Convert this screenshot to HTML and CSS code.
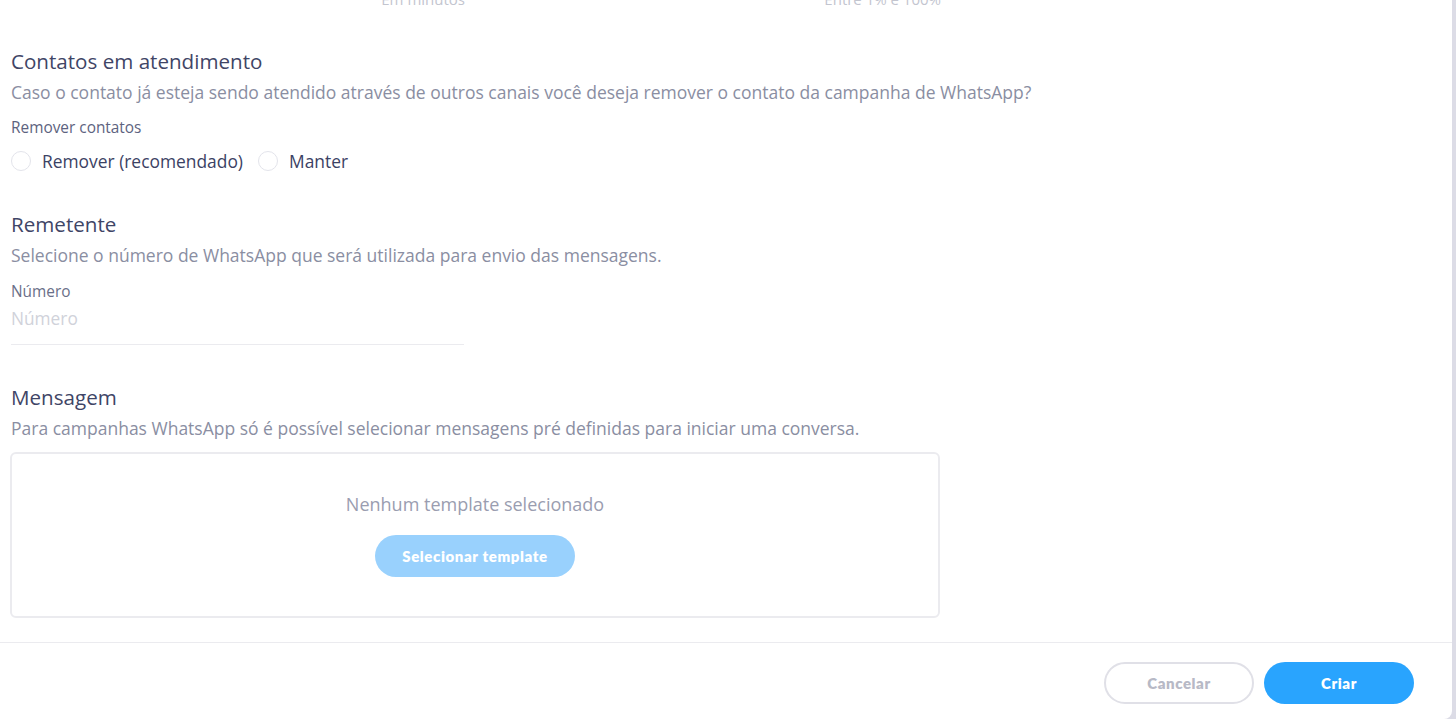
FILE: index.html
```html
<!DOCTYPE html>
<html lang="pt-BR">
<head>
<meta charset="utf-8">
<title>Campanha WhatsApp</title>
<link rel="stylesheet" href="styles.css">
</head>
<body>
<div class="panel">
  <div class="content">
    <div class="hint-row">
      <div class="hint-col">Em minutos</div>
      <div class="hint-col">Entre 1% e 100%</div>
    </div>

    <section class="section first">
      <h2 class="title">Contatos em atendimento</h2>
      <p class="desc">Caso o contato já esteja sendo atendido através de outros canais você deseja remover o contato da campanha de WhatsApp?</p>
      <div class="label">Remover contatos</div>
      <div class="radios">
        <label class="radio"><span class="circle"></span><span>Remover (recomendado)</span></label>
        <label class="radio"><span class="circle"></span><span>Manter</span></label>
      </div>
    </section>

    <section class="section">
      <h2 class="title">Remetente</h2>
      <p class="desc">Selecione o número de WhatsApp que será utilizada para envio das mensagens.</p>
      <div class="label light">Número</div>
      <div class="input">Número</div>
    </section>

    <section class="section last">
      <h2 class="title">Mensagem</h2>
      <p class="desc">Para campanhas WhatsApp só é possível selecionar mensagens pré definidas para iniciar uma conversa.</p>
      <div class="template-box">
        <div class="empty">Nenhum template selecionado</div>
        <button class="btn btn-light">Selecionar template</button>
      </div>
    </section>
  </div>

  <div class="footer">
    <button class="btn btn-outline">Cancelar</button>
    <button class="btn btn-primary">Criar</button>
  </div>
</div>
</body>
</html>
```

FILE: styles.css
```css
html, body {
  margin: 0;
  padding: 0;
  height: 719px;
  overflow: hidden;
}
body {
  background: #dcdce6;
  font-family: "Open Sans", "Liberation Sans", sans-serif;
}
.panel {
  width: 1452px;
  height: 719px;
  background: #ffffff;
  border-bottom-right-radius: 8px;
  display: flex;
  flex-direction: column;
}
.content {
  flex: 1;
  padding-left: 11px;
}
.hint-row {
  display: flex;
  gap: 22px;
  width: 930px;
  margin-top: -11px;
  height: 20px;
}
.hint-col {
  width: 454px;
  text-align: right;
  font-size: 15px;
  line-height: 20px;
  color: #c3c5cf;
}
.section {
  margin-top: 38px;
}
.section.first {
  margin-top: 39px;
}
.section.last {
  margin-top: 39px;
}
.title {
  margin: 0;
  font-size: 20.6px;
  line-height: 26px;
  font-weight: 500;
  color: #3f4566;
}
.desc {
  margin: 6px 0 0;
  font-size: 17.5px;
  line-height: 24px;
  color: #8a8ea2;
}
.label {
  margin-top: 14px;
  font-size: 15.4px;
  line-height: 20px;
  font-weight: 500;
  color: #5d6380;
}
.label.light {
  margin-top: 15px;
  font-weight: 400;
  color: #6a6f88;
}
.radios {
  display: flex;
  gap: 15px;
  margin-top: 11px;
}
.radio {
  display: flex;
  align-items: center;
  gap: 11px;
  font-size: 17.4px;
  line-height: 24px;
  color: #3b4264;
}
.circle {
  width: 18px;
  height: 18px;
  border: 1px solid #e3e4eb;
  border-radius: 50%;
  background: #fff;
}
.input {
  width: 453px;
  margin-top: 5px;
  padding-bottom: 13px;
  border-bottom: 1px solid #ebebef;
  font-size: 17.3px;
  line-height: 24px;
  color: #d0d2da;
}
.template-box {
  width: 926px;
  height: 162px;
  margin-top: 12px;
  margin-left: -1px;
  border: 2px solid #ebebef;
  border-radius: 6px;
  display: flex;
  flex-direction: column;
  align-items: center;
  box-sizing: content-box;
}
.empty {
  margin-top: 38px;
  font-size: 18px;
  line-height: 24px;
  color: #9a9db0;
}
.btn {
  font-family: "Lato", "Liberation Sans", sans-serif;
  font-weight: 800;
  font-size: 15px;
  letter-spacing: 0.6px;
  border-radius: 21px;
  height: 42px;
  cursor: pointer;
}
.btn-light {
  margin-top: 19px;
  width: 200px;
  border: none;
  background: #99d1fd;
  color: #ffffff;
}
.footer {
  height: 77px;
  border-top: 1px solid #ebebef;
  display: flex;
  justify-content: flex-end;
  align-items: flex-start;
  gap: 10px;
  padding-right: 38px;
  padding-top: 19px;
  box-sizing: border-box;
}
.btn-outline {
  width: 150px;
  background: #fff;
  border: 2px solid #e0e0e7;
  color: #b7b9c6;
}
.btn-primary {
  width: 150px;
  border: none;
  background: #29a4fe;
  color: #ffffff;
}
```
